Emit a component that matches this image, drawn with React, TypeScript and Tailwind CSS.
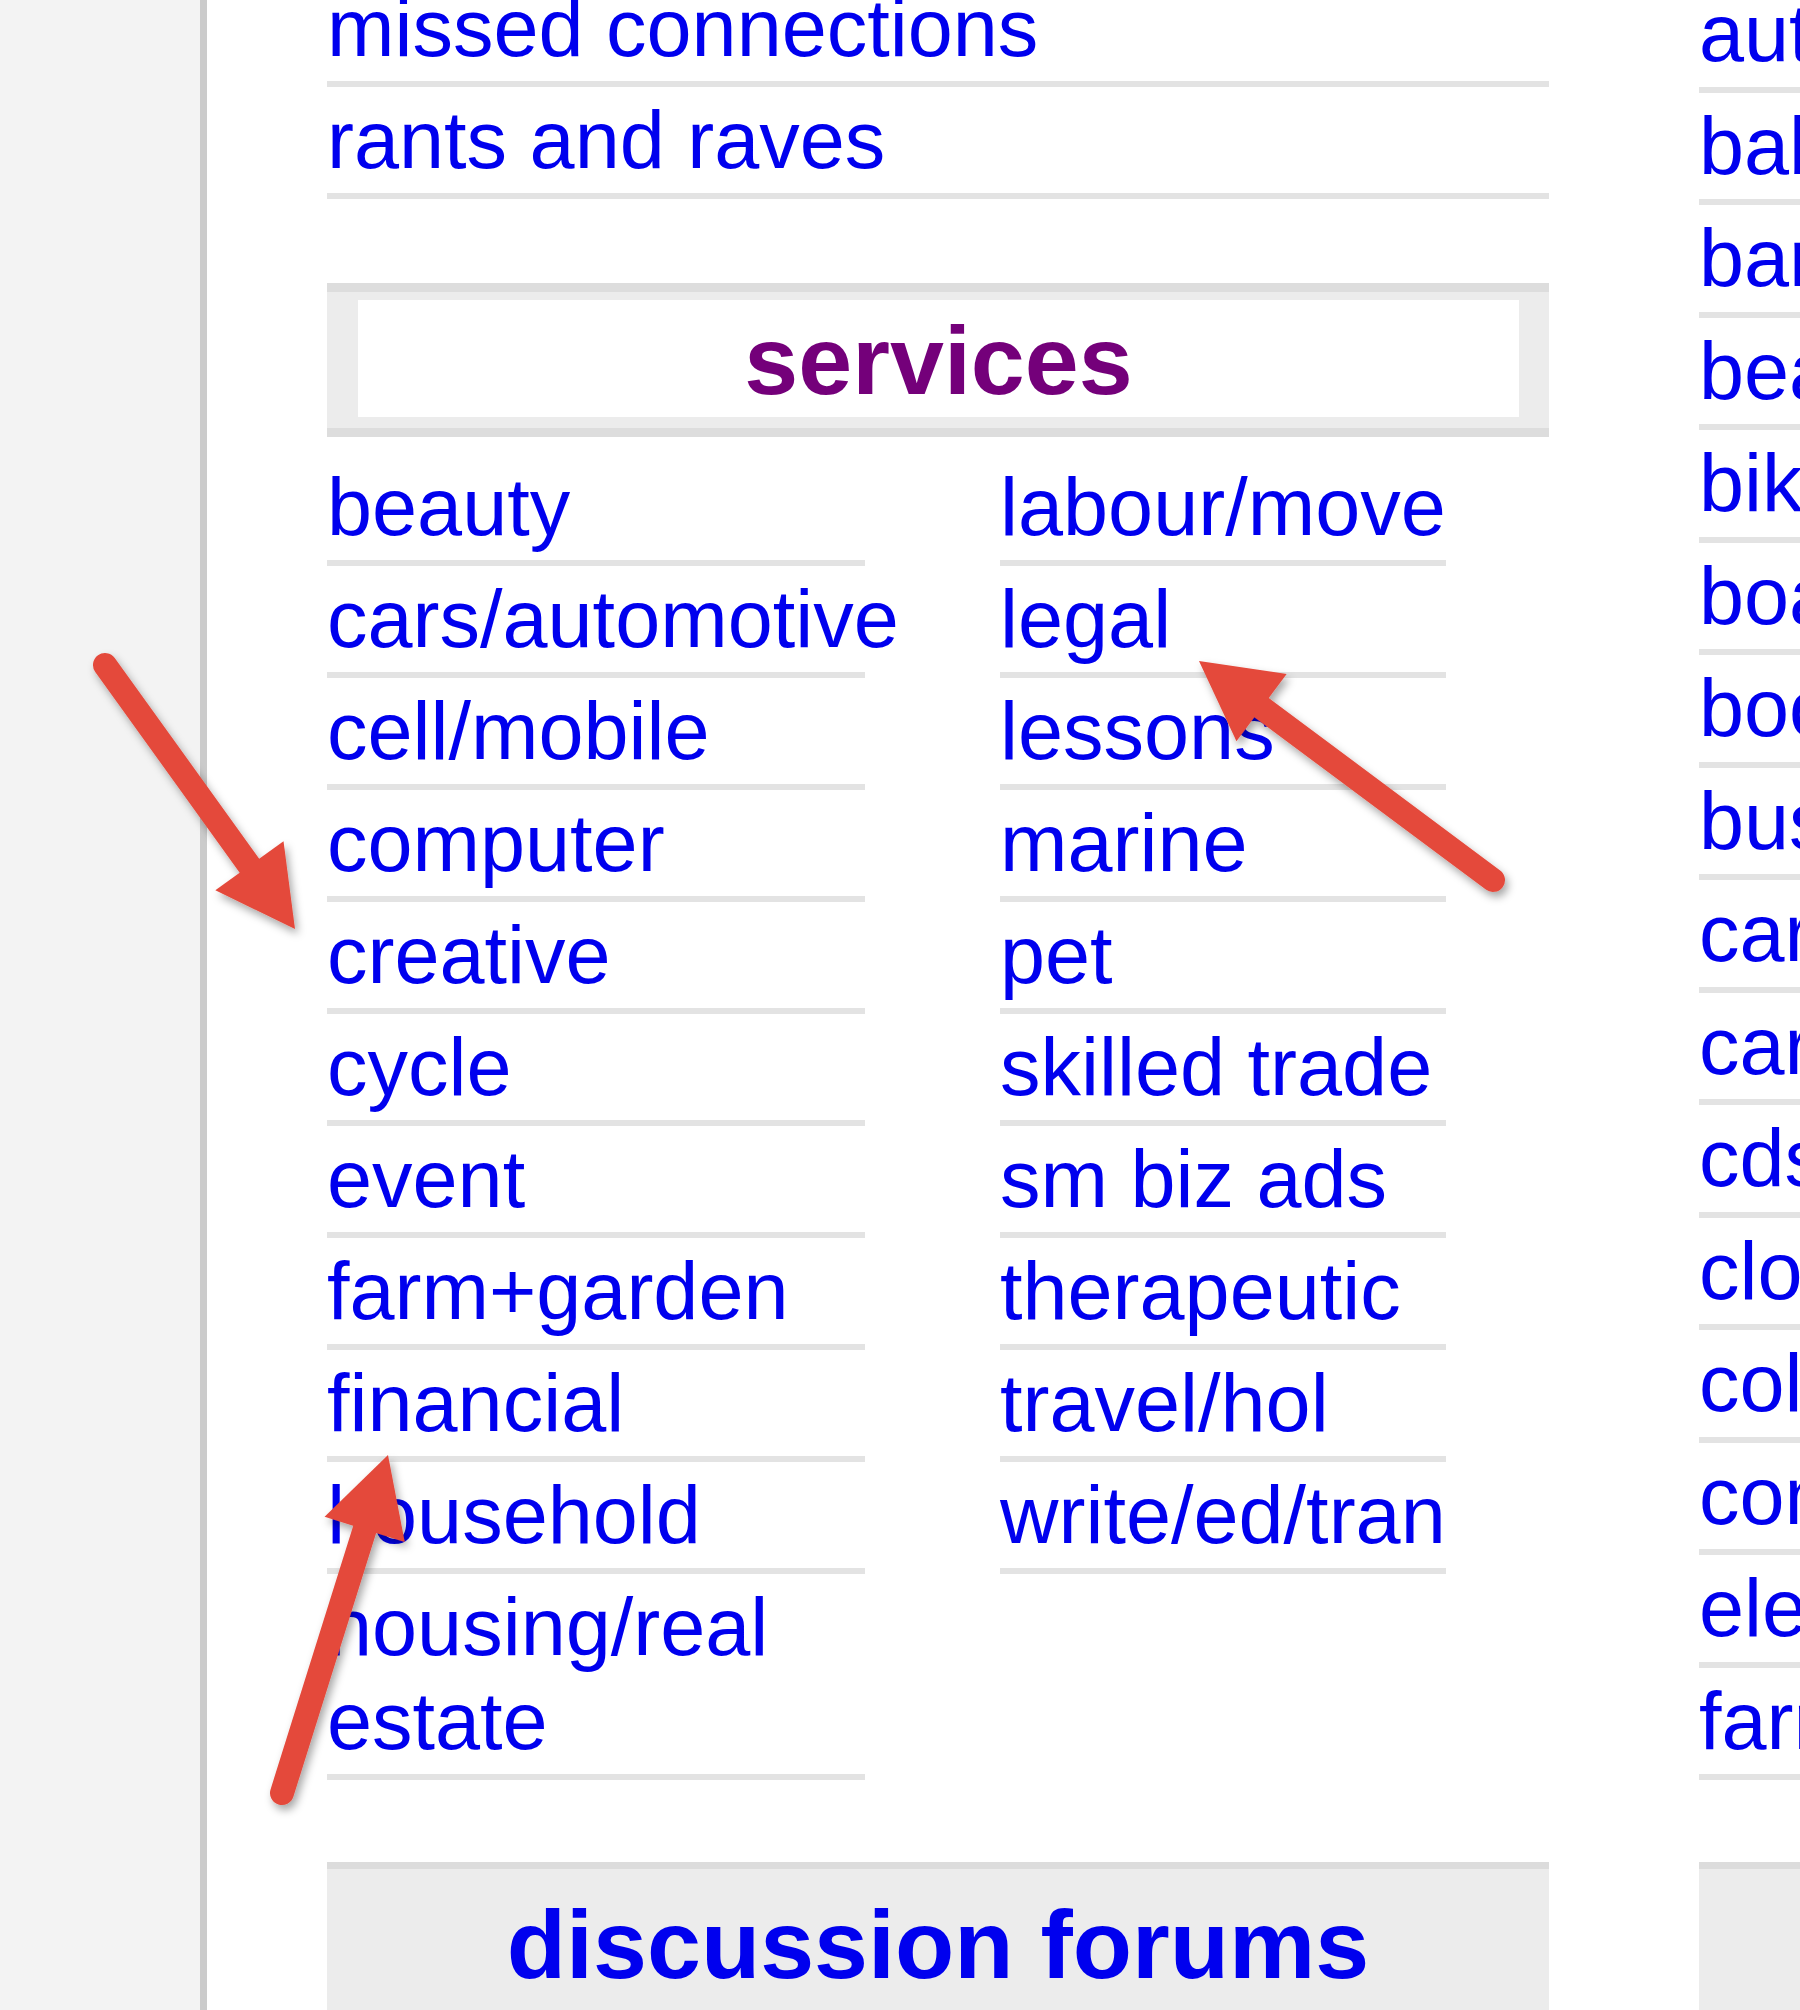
import React from "react";

const community = ["missed connections", "rants and raves"];
const servicesLeft = [
  "beauty",
  "cars/automotive",
  "cell/mobile",
  "computer",
  "creative",
  "cycle",
  "event",
  "farm+garden",
  "financial",
  "household",
  "housing/real estate",
];
const servicesRight = [
  "labour/move",
  "legal",
  "lessons",
  "marine",
  "pet",
  "skilled trade",
  "sm biz ads",
  "therapeutic",
  "travel/hol",
  "write/ed/tran",
];
const forSale = [
  "auto parts",
  "baby+kid",
  "barter",
  "beauty+hlth",
  "bikes",
  "boats",
  "books",
  "business",
  "caravans",
  "cars+trucks",
  "cds/dvd/vhs",
  "clothes+acc",
  "collectibles",
  "computers",
  "electronics",
  "farm+garden",
];

function Row({ label, wrap }: { label: string; wrap?: boolean }) {
  return (
    <li className="border-b-[6px] border-[#e3e3e3] pt-[6px] pb-[6px]">
      <a
        href="#"
        className={`block text-[81px] leading-[94px] text-[#0000ee] ${wrap ? "" : "whitespace-nowrap"}`}
      >
        {label}
      </a>
    </li>
  );
}

function RowR({ label }: { label: string }) {
  return (
    <li className="border-b-[6px] border-[#e3e3e3] pt-[6px] pb-[6.5px]">
      <a href="#" className="block whitespace-nowrap text-[81px] leading-[94px] text-[#0000ee]">
        {label}
      </a>
    </li>
  );
}

type Pt = [number, number];

function Arrow({ t, p }: { t: Pt; p: Pt }) {
  const dx = p[0] - t[0];
  const dy = p[1] - t[1];
  const len = Math.hypot(dx, dy);
  const ux = dx / len;
  const uy = dy / len;
  const headLen = 78;
  const half = 42;
  const bx = p[0] - ux * headLen;
  const by = p[1] - uy * headLen;
  const px = -uy;
  const py = ux;
  const pts = `${p[0]},${p[1]} ${bx + px * half},${by + py * half} ${bx - px * half},${by - py * half}`;
  return (
    <g filter="url(#arrowShadow)">
      <line
        x1={t[0]}
        y1={t[1]}
        x2={bx + ux * 8}
        y2={by + uy * 8}
        stroke="#e4493b"
        strokeWidth={24}
        strokeLinecap="round"
      />
      <polygon points={pts} fill="#e4493b" strokeLinejoin="round" />
    </g>
  );
}

export default function App() {
  return (
    <div className="relative flex h-[2010px] w-[1800px] overflow-hidden bg-white font-['Liberation_Sans',Arial,sans-serif]">
      {/* left gray strip */}
      <div className="h-full w-[207px] shrink-0 border-r-[7px] border-[#cbcbcb] bg-[#f3f3f3]" />

      <div className="flex shrink-0 gap-[150px] pl-[120px]">
        {/* column 1 */}
        <div className="w-[1222px] shrink-0">
          <ul className="-mt-[25px]">
            {community.map((c) => (
              <Row key={c} label={c} />
            ))}
          </ul>

          <section className="mt-[84px]">
            <div className="border-y-[9px] border-[#dddddd] bg-[#ececec] pt-[8px] pb-[11px] pl-[31px] pr-[30px]">
              <div className="flex h-[117px] items-start justify-center bg-white pt-[6px]">
                <a href="#" className="text-[97px] font-bold leading-[110px] text-[#74007a]">
                  services
                </a>
              </div>
            </div>

            <div className="mt-[17px] flex gap-[135px]">
              <ul className="w-[538px] shrink-0">
                {servicesLeft.map((s) => (
                  <Row key={s} label={s} wrap={s === "housing/real estate"} />
                ))}
              </ul>
              <ul className="w-[446px] shrink-0">
                {servicesRight.map((s) => (
                  <Row key={s} label={s} />
                ))}
              </ul>
            </div>
          </section>

          <section className="mt-[82px]">
            <div className="h-[160px] border-t-[7px] border-[#dcdcdc] bg-[#ececec] pt-[20px] text-center">
              <a href="#" className="text-[97px] font-bold leading-[112px] text-[#0000ee]">
                discussion forums
              </a>
            </div>
          </section>
        </div>

        {/* column 2 */}
        <div className="w-[1222px] shrink-0">
          <ul className="-mt-[20px]">
            {forSale.map((s) => (
              <RowR key={s} label={s} />
            ))}
          </ul>
          <section className="mt-[82px]">
            <div className="h-[160px] border-t-[7px] border-[#dcdcdc] bg-[#ececec]" />
          </section>
        </div>
      </div>

      {/* annotation arrows */}
      <svg
        className="pointer-events-none absolute left-0 top-0"
        width={1800}
        height={2010}
        viewBox="0 0 1800 2010"
      >
        <defs>
          <filter id="arrowShadow" x="-20%" y="-20%" width="140%" height="140%">
            <feDropShadow dx="3" dy="5" stdDeviation="4" floodColor="#000" floodOpacity="0.35" />
          </filter>
        </defs>
        <Arrow t={[105, 665]} p={[295, 929]} />
        <Arrow t={[1493, 880]} p={[1199, 661]} />
        <Arrow t={[282, 1793]} p={[388, 1455]} />
      </svg>
    </div>
  );
}
